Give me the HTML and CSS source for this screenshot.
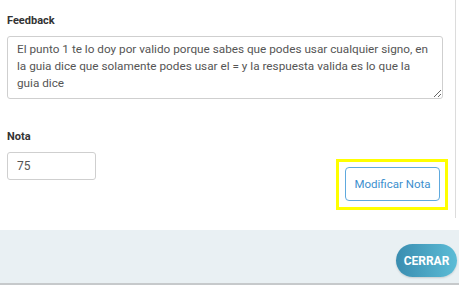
FILE: index.html
```html
<!DOCTYPE html>
<html lang="es">
    <head>
        <meta charset="UTF-8" />
        <meta name="viewport" content="width=device-width, initial-scale=1.0" />
        <title>Corrección</title>
        <link rel="stylesheet" href="styles.css">
    </head>
    <body>
        <div class="modal">
            <div class="cuerpo">
                <label class="etiqueta" for="feedback">Feedback</label>
                <textarea id="feedback" class="texto">El punto 1 te lo doy por valido porque sabes que podes usar cualquier signo, en la guia dice que solamente podes usar el = y la respuesta valida es lo que la guia dice</textarea>
                <div class="filaNota">
                    <div class="campoNota">
                        <label class="etiqueta" for="nota">Nota</label>
                        <input id="nota" class="nota" type="text" value="75" />
                    </div>
                    <div class="resaltado">
                        <button class="modificar">Modificar Nota</button>
                    </div>
                </div>
            </div>
            <footer class="pie">
                <button class="cerrar">CERRAR</button>
            </footer>
        </div>
    </body>
</html>
```

FILE: styles.css
```css
*{
    margin: 0;
    padding: 0;
    box-sizing: border-box;
}
body{
    font-family: Roboto, "Liberation Sans", sans-serif;
    background-color: #fff;
    overflow: hidden;
}
.modal{
    width: 459px;
    height: 285px;
    display: flex;
    flex-direction: column;
}
.cuerpo{
    width: 456px;
    height: 218px;
    padding: 14px 12px 0 7px;
    border-right: 1px solid #dcdcdc;
}
.etiqueta{
    display: block;
    font-size: 11px;
    font-weight: bold;
    line-height: 14px;
    color: #333;
    margin-bottom: 8px;
}
.texto{
    display: block;
    width: 436px;
    height: 63px;
    padding: 4px 9px;
    border: 1px solid #cfcfcf;
    border-radius: 3px;
    font-family: Roboto, "Liberation Sans", sans-serif;
    font-size: 11.75px;
    line-height: 17px;
    color: #555;
    resize: vertical;
}
.filaNota{
    display: flex;
    justify-content: space-between;
    align-items: flex-start;
    margin-top: 31px;
}
.nota{
    display: block;
    width: 89px;
    height: 28px;
    padding: 0 9px;
    border: 1px solid #cfcfcf;
    border-radius: 3px;
    font-family: Roboto, "Liberation Sans", sans-serif;
    font-size: 12px;
    color: #555;
}
.resaltado{
    margin-top: 29px;
    margin-right: -5px;
    padding: 5px 5px 6px 6px;
    border: 3px solid #ffff00;
}
.modificar{
    display: block;
    width: 95px;
    height: 34px;
    background-color: #fff;
    border: 1px solid #5ea9de;
    border-radius: 4px;
    font-family: Roboto, "Liberation Sans", sans-serif;
    font-size: 11.5px;
    color: #3d8fce;
}
.pie{
    margin-top: 12px;
    height: 55px;
    background-color: #e9f0f3;
    border-bottom: 2px solid #c6c9cb;
    display: flex;
    justify-content: flex-end;
    align-items: flex-start;
    padding: 14px 2px 0 0;
}
.cerrar{
    width: 61px;
    height: 33px;
    border: none;
    border-radius: 17px;
    background: linear-gradient(to right, #3a8db0, #5cbcd6);
    color: #fff;
    font-family: Roboto, "Liberation Sans", sans-serif;
    font-size: 12px;
    font-weight: bold;
    box-shadow: 0 1px 2px rgba(0,0,0,0.15);
}
```
